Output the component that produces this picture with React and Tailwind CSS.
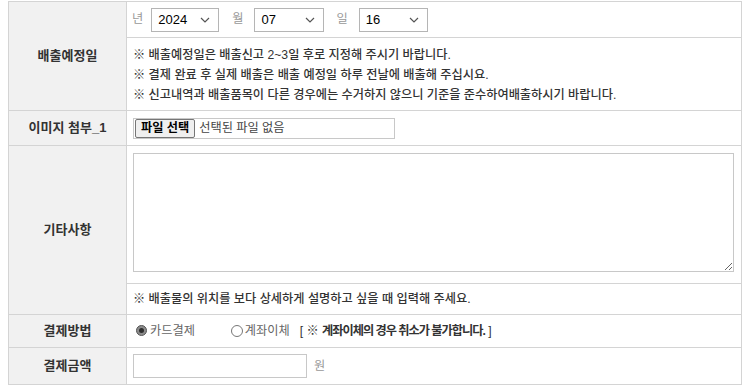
import React from "react";

function Chevron() {
  return (
    <svg width="10" height="6" viewBox="0 0 10 6" className="absolute right-[9px] top-[9px]">
      <path d="M1 1 L5 5 L9 1" fill="none" stroke="#555" strokeWidth="1.2" />
    </svg>
  );
}

function DateSelect({ value, width }) {
  return (
    <div className={`relative h-[24px] ${width}`}>
      <select
        defaultValue={value}
        className="h-full w-full appearance-none border border-[#b5b5b5] bg-white pl-[6px] text-[13px] text-black outline-none"
      >
        <option value={value}>{value}</option>
      </select>
      <Chevron />
    </div>
  );
}

export default function App() {
  const label = "bg-[#f1f1f1] border border-[#d4d4d4] text-center text-[13px] font-bold text-[#333]";
  const cell = "border border-[#d4d4d4] px-[6px] text-[12.2px] text-[#333]";

  return (
    <div className="bg-white px-[8px] pt-px font-['Liberation_Sans','Noto_Sans_CJK_KR',sans-serif]">
      <table className="w-[734px] table-fixed border-collapse">
        <colgroup>
          <col className="w-[118px]" />
          <col />
        </colgroup>
        <tbody>
          <tr className="h-[36px]">
            <td rowSpan={2} className={label}>배출예정일</td>
            <td className={cell}>
              <div className="flex items-center">
                <span className="ml-[-1px] mr-[8px] text-[#999]">년</span>
                <DateSelect value="2024" width="w-[68px]" />
                <span className="ml-[13px] mr-[11px] text-[#999]">월</span>
                <DateSelect value="07" width="w-[70px]" />
                <span className="ml-[12px] mr-[11px] text-[#999]">일</span>
                <DateSelect value="16" width="w-[69px]" />
              </div>
            </td>
          </tr>
          <tr className="h-[72px]">
            <td className={`${cell} pt-[7px] pb-[5px] leading-[20px] font-medium`}>
              <p>※ 배출예정일은 배출신고 2~3일 후로 지정해 주시기 바랍니다.</p>
              <p>※ 결제 완료 후 실제 배출은 배출 예정일 하루 전날에 배출해 주십시요.</p>
              <p>※ 신고내역과 배출품목이 다른 경우에는 수거하지 않으니 기준을 준수하여배출하시기 바랍니다.</p>
            </td>
          </tr>
          <tr className="h-[35px]">
            <td className={label}>이미지 첨부_1</td>
            <td className={cell}>
              <div className="flex h-[21px] w-[262px] items-center border border-[#c8c8c8]">
                <span className="ml-px flex h-[19px] items-center rounded-[2px] border border-[#767676] bg-[#efefef] px-[5px] font-bold text-black">
                  파일 선택
                </span>
                <span className="ml-[4px] text-[#444]">선택된 파일 없음</span>
              </div>
            </td>
          </tr>
          <tr className="h-[138px]">
            <td rowSpan={2} className={label}>기타사항</td>
            <td className={`${cell} pt-[7px] pb-[11px] align-top`}>
              <textarea className="block h-[119px] w-[601px] resize border border-[#c8c8c8] outline-none" />
            </td>
          </tr>
          <tr className="h-[31px]">
            <td className={`${cell} font-medium`}>※ 배출물의 위치를 보다 상세하게 설명하고 싶을 때 입력해 주세요.</td>
          </tr>
          <tr className="h-[33px]">
            <td className={label}>결제방법</td>
            <td className={cell}>
              <div className="flex items-center">
                <span className="ml-[3px] flex h-[11px] w-[11px] items-center justify-center rounded-full border border-[#555] bg-[#8c8c8c]">
                  <span className="h-[5px] w-[5px] rounded-full bg-[#2e2e2e]" />
                </span>
                <span className="ml-[3px] text-[#666]">카드결제</span>
                <span className="ml-[36px] h-[12px] w-[12px] rounded-full border border-[#777] bg-white" />
                <span className="ml-[2px] text-[#666]">계좌이체</span>
                <span className="ml-[10px] text-[#333]">
                  [ ※ <b className="tracking-[-1px]">계좌이체의 경우 취소가 불가합니다.</b> ]
                </span>
              </div>
            </td>
          </tr>
          <tr className="h-[37px]">
            <td className={label}>결제금액</td>
            <td className={cell}>
              <div className="flex items-center">
                <input className="h-[24px] w-[174px] border border-[#c8c8c8] outline-none" />
                <span className="ml-[7px] text-[#999]">원</span>
              </div>
            </td>
          </tr>
        </tbody>
      </table>
    </div>
  );
}
